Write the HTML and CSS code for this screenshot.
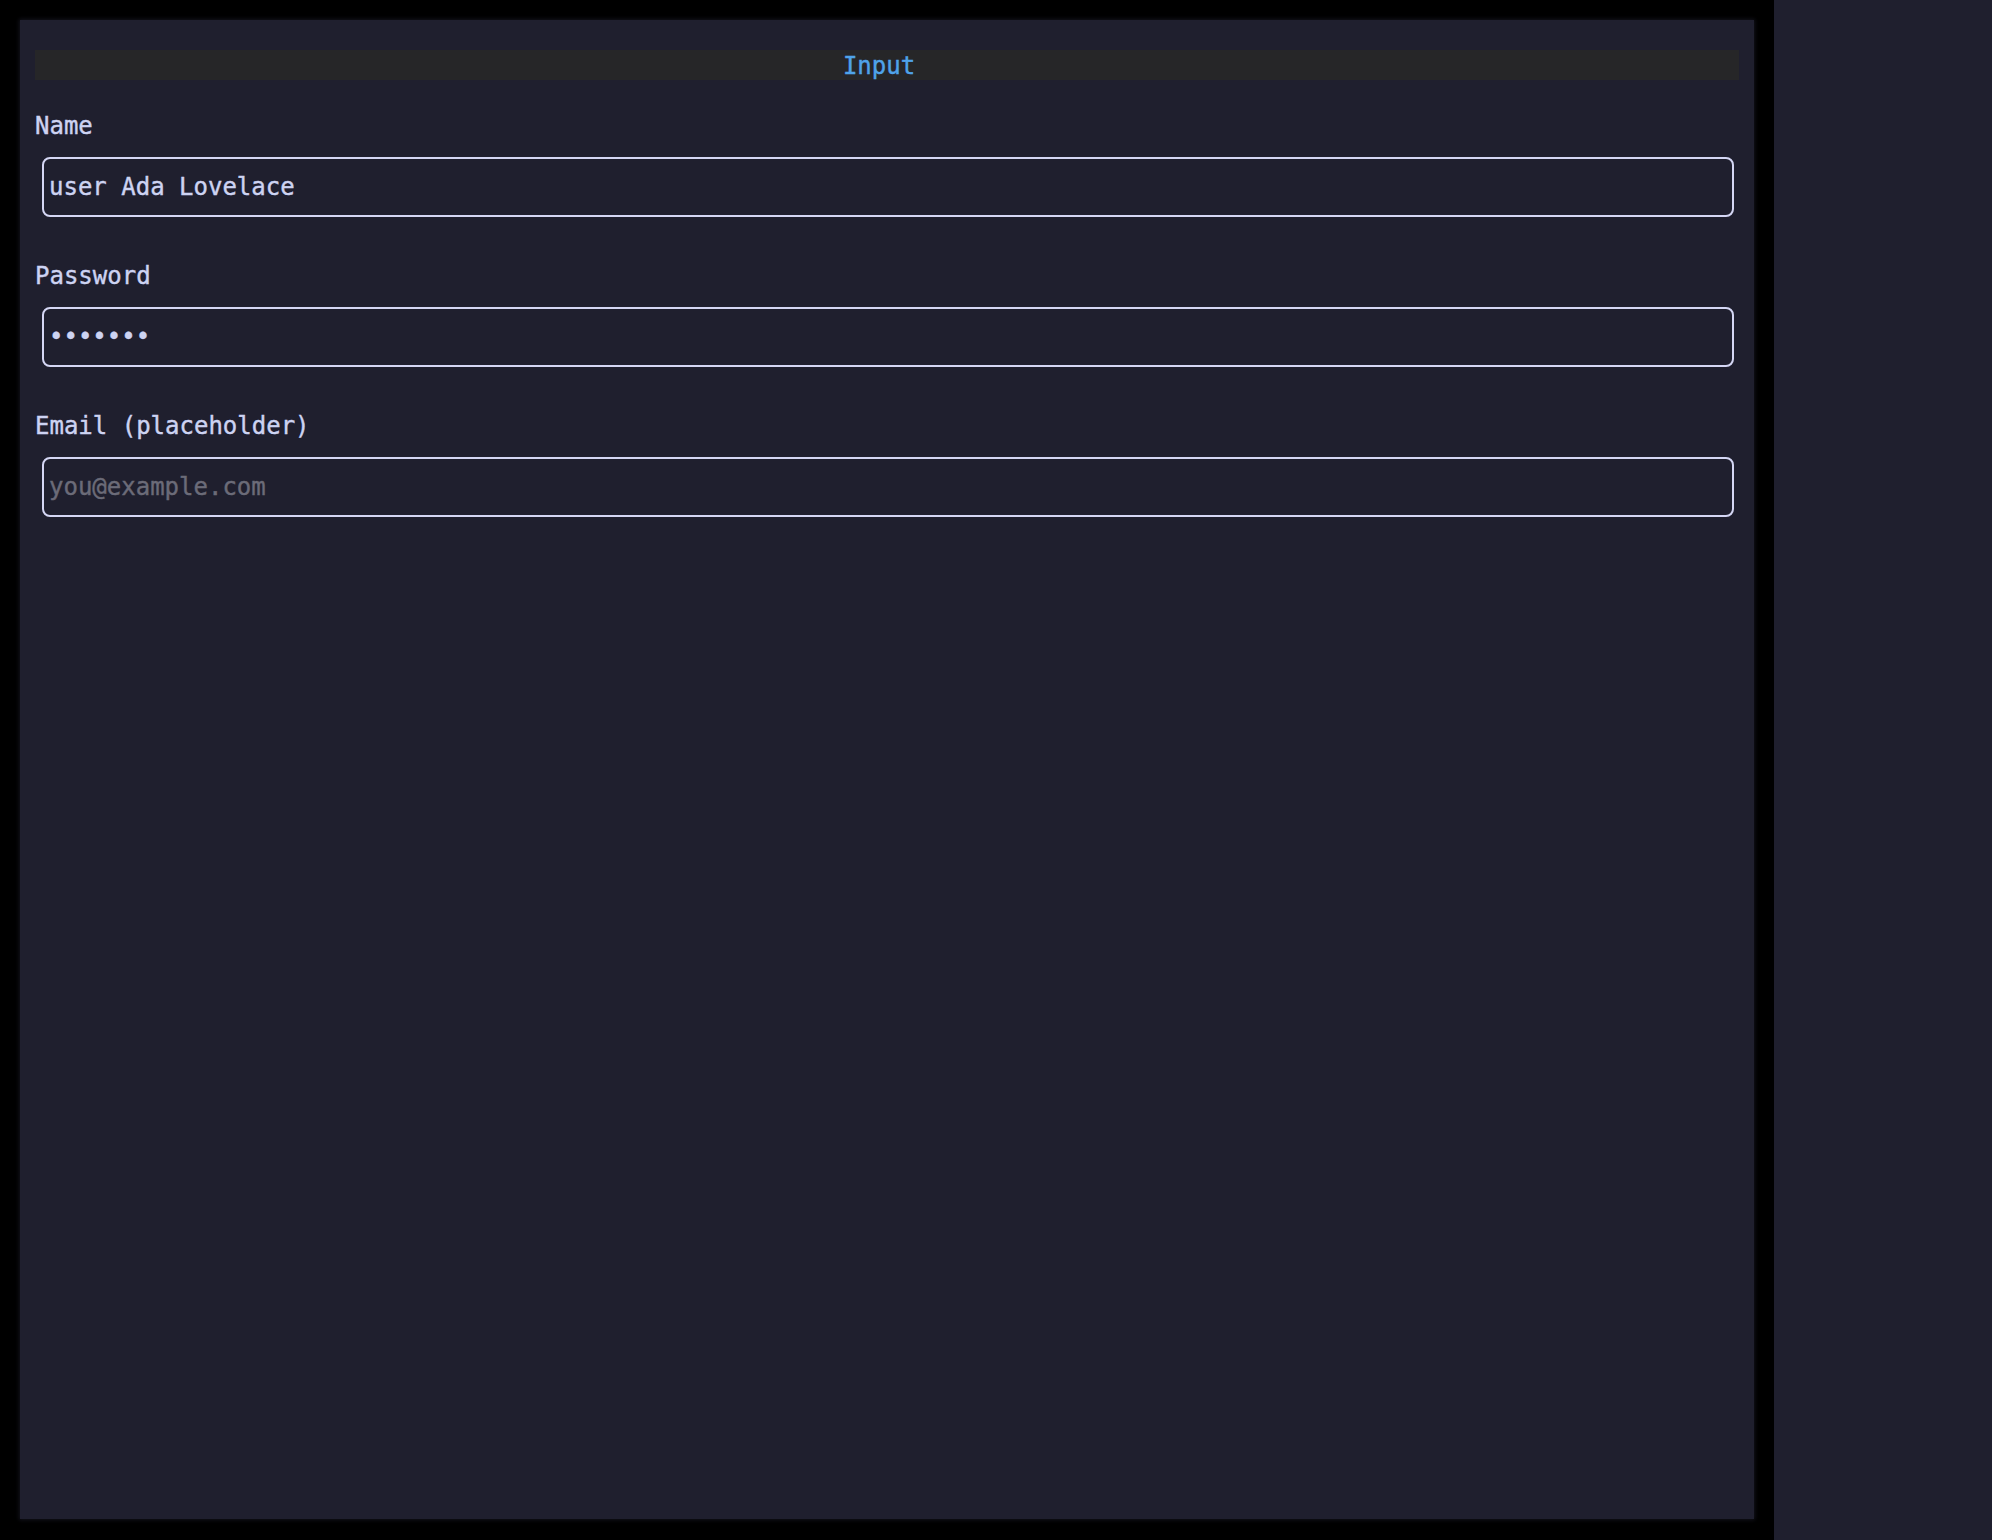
FILE: index.html
```html
<!DOCTYPE html>
<html>
<head>
<meta charset="utf-8">
<link rel="stylesheet" href="styles.css">
</head>
<body>
<div class="screen">
  <main class="panel">
    <div class="title">Input</div>
    <div class="field">
      <label class="label">Name</label>
      <input class="box" type="text" value="user Ada Lovelace">
    </div>
    <div class="field">
      <label class="label">Password</label>
      <input class="box" type="password" value="1234567">
    </div>
    <div class="field">
      <label class="label">Email (placeholder)</label>
      <input class="box" type="text" placeholder="you@example.com">
    </div>
  </main>
  <aside class="side"></aside>
</div>
</body>
</html>
```
FILE: styles.css
```css
html, body {
  margin: 0;
  padding: 0;
  background: #000;
  height: 100%;
}
body {
  font-family: "DejaVu Sans Mono", monospace;
  font-size: 24px;
  color: #cdd3f2;
  -webkit-text-stroke: 0.4px currentColor;
}
.screen {
  display: flex;
  height: 1540px;
  width: 1992px;
}
.panel {
  margin: 20px 0 21px 20px;
  width: 1734px;
  background: #1f1f2e;
  box-shadow: 0 0 4px 1px rgba(31,31,46,0.6);
  padding: 30px 15px 0 15px;
  box-sizing: border-box;
  display: flex;
  flex-direction: column;
}
.title {
  height: 30px;
  background: #262628;
  color: #4fa3ea;
  text-align: center;
  line-height: 32px;
  padding-right: 16px;
  margin-bottom: 32px;
}
.field {
  display: flex;
  flex-direction: column;
  margin-bottom: 45px;
}
.label {
  line-height: 28px;
  height: 28px;
  margin-bottom: 17px;
}
.box {
  margin: 0 5px 0 7px;
  height: 60px;
  box-sizing: border-box;
  border: 2px solid #d4d6f4;
  border-radius: 8px;
  background: #1f1f2e;
  color: #cdd3f2;
  font-family: "DejaVu Sans Mono", monospace;
  font-size: 24px;
  -webkit-text-stroke: 0.4px currentColor;
  padding: 0 4px 0 5px;
  outline: none;
}
.box::placeholder {
  color: #6b6b78;
  -webkit-text-stroke: 0.4px #6b6b78;
}
.side {
  margin-left: 20px;
  flex: 1;
  background: #1f1f2e;
}
```
